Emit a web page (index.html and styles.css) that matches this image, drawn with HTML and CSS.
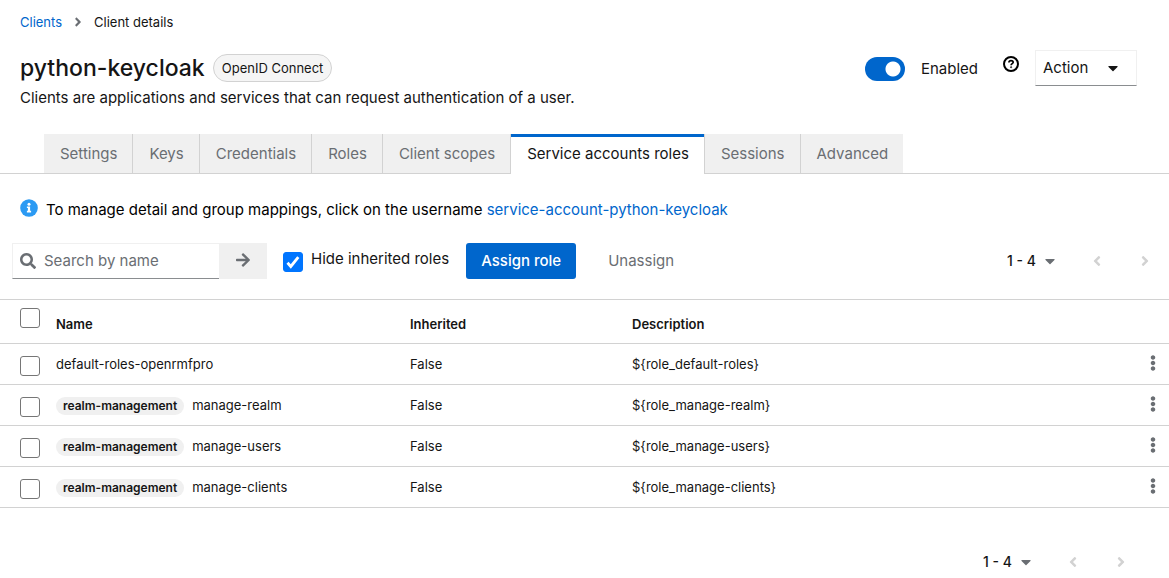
FILE: index.html
```html
<!DOCTYPE html>
<html lang="en">
<head>
<meta charset="utf-8">
<title>Client details</title>
<link rel="stylesheet" href="styles.css">
</head>
<body>
<svg class="sprite" aria-hidden="true">
  <symbol id="angle-right" viewBox="0 0 256 512"><path d="M224.3 273l-136 136c-9.400 9.400-24.600 9.400-33.900 0l-22.600-22.600c-9.400-9.400-9.400-24.600 0-33.900l96.400-96.400-96.400-96.400c-9.400-9.400-9.400-24.600 0-33.900L54.300 103c9.400-9.400 24.600-9.400 33.900 0l136 136c9.500 9.400 9.500 24.600.1 34z"/></symbol>
  <symbol id="angle-left" viewBox="0 0 256 512"><path d="M31.700 239l136-136c9.400-9.400 24.600-9.400 33.900 0l22.600 22.600c9.400 9.400 9.400 24.600 0 33.900L127.900 256l96.400 96.400c9.400 9.400 9.400 24.600 0 33.900L201.700 409c-9.400 9.400-24.600 9.400-33.900 0l-136-136c-9.500-9.400-9.500-24.600-.1-34z"/></symbol>
  <symbol id="caret" viewBox="0 0 320 512"><path d="M31.300 192h257.300c17.800 0 26.700 21.500 14.100 34.100L174.100 354.800c-7.800 7.800-20.500 7.800-28.300 0L17.200 226.100C4.600 213.500 13.500 192 31.300 192z"/></symbol>
  <symbol id="kebab" viewBox="0 0 192 512"><path d="M96 184c39.800 0 72 32.200 72 72s-32.200 72-72 72-72-32.200-72-72 32.200-72 72-72zM24 80c0 39.800 32.200 72 72 72s72-32.200 72-72S135.800 8 96 8 24 40.200 24 80zm0 352c0 39.800 32.200 72 72 72s72-32.200 72-72-32.200-72-72-72-72 32.200-72 72z"/></symbol>
</svg>

<header class="page-header">
  <nav class="breadcrumb" aria-label="Breadcrumb">
    <a href="#clients">Clients</a>
    <svg class="crumb-icon" aria-hidden="true"><use href="#angle-right"/></svg>
    <span>Client details</span>
  </nav>
  <div class="title-row">
    <h1 class="title">python-keycloak</h1>
    <span class="protocol">OpenID Connect</span>
    <div class="header-actions">
      <label class="switch"><input class="switch-input" type="checkbox" role="switch" checked><span>Enabled</span></label>
      <button class="help" type="button" aria-label="Help">
        <svg class="help-icon" viewBox="0 0 16 16" aria-hidden="true"><circle cx="8" cy="8" r="7" stroke-width="2"/><path d="M5.900 6.500C6 5.100 6.900 4.600 8 4.600c1.300 0 2.200.7 2.200 1.700C10.200 7.700 8.100 7.600 8.100 9.200" stroke-width="1.700"/><circle cx="8.100" cy="11.200" r=".6" stroke-width=".9"/></svg>
      </button>
      <button class="action" type="button"><span>Action</span><svg class="caret" aria-hidden="true"><use href="#caret"/></svg></button>
    </div>
  </div>
  <p class="subtitle">Clients are applications and services that can request authentication of a user.</p>
</header>

<nav class="tabs" aria-label="Client sections">
  <button class="tab" type="button">Settings</button>
  <button class="tab" type="button">Keys</button>
  <button class="tab" type="button">Credentials</button>
  <button class="tab" type="button">Roles</button>
  <button class="tab" type="button">Client scopes</button>
  <button class="tab tab-current" type="button" aria-current="page">Service accounts roles</button>
  <button class="tab" type="button">Sessions</button>
  <button class="tab" type="button">Advanced</button>
</nav>

<main>
  <p class="notice">
    <svg class="notice-icon" width="18" height="18" viewBox="0 0 18 18" aria-hidden="true"><circle cx="9" cy="9" r="8.800" fill="#2b9af3"/><circle cx="9" cy="5.200" r="1.500" fill="#fff"/><path d="M6.900 7.500h3.200v4.300h1v1.600H6.900v-1.600h1V9.100h-1z" fill="#fff"/></svg>
    <span>To manage detail and group mappings, click on the username <a href="#user">service-account-python-keycloak</a></span>
  </p>

  <div class="toolbar">
    <form class="search">
      <label class="search-box">
        <svg class="search-icon" viewBox="0 0 512 512" aria-hidden="true"><path d="M505 442.700L405.300 343c-4.500-4.500-10.600-7-17-7H372c27.600-35.300 44-79.700 44-128C416 93.100 322.900 0 208 0S0 93.100 0 208s93.100 208 208 208c48.300 0 92.700-16.400 128-44v16.300c0 6.400 2.500 12.500 7 17l99.700 99.700c9.400 9.400 24.600 9.400 33.900 0l28.300-28.300c9.400-9.400 9.400-24.600.1-34zM208 336c-70.700 0-128-57.200-128-128 0-70.700 57.200-128 128-128 70.700 0 128 57.200 128 128 0 70.700-57.200 128-128 128z"/></svg>
        <input class="search-input" type="text" placeholder="Search by name" aria-label="Search by name">
      </label>
      <button class="search-go" type="button" aria-label="Search">
        <svg width="14" height="16" viewBox="0 0 448 512" aria-hidden="true"><path d="M190.500 66.900l22.200-22.200c9.400-9.400 24.600-9.400 33.900 0L441 239c9.400 9.400 9.400 24.600 0 33.900L246.600 467.300c-9.400 9.400-24.600 9.400-33.900 0l-22.200-22.200c-9.500-9.500-9.300-25 .4-34.300L311.400 296H24c-13.300 0-24-10.700-24-24v-32c0-13.300 10.700-24 24-24h287.400L190.900 101.200c-9.800-9.300-10-24.800-.4-34.300z"/></svg>
      </button>
    </form>
    <label class="inherit"><input class="check" type="checkbox" checked><span>Hide inherited roles</span></label>
    <button class="assign" type="button">Assign role</button>
    <button class="unassign" type="button" disabled>Unassign</button>
    <div class="pager">
      <button class="range" type="button"><span>1 - 4</span><svg class="caret" aria-hidden="true"><use href="#caret"/></svg></button>
      <button class="step" type="button" aria-label="Previous" disabled><svg class="step-icon"><use href="#angle-left"/></svg></button>
      <button class="step" type="button" aria-label="Next" disabled><svg class="step-icon"><use href="#angle-right"/></svg></button>
    </div>
  </div>

  <table class="roles">
    <colgroup><col class="col-check"><col class="col-name"><col class="col-inherited"><col><col class="col-menu"></colgroup>
    <thead>
      <tr><th class="cell-check"><input class="check" type="checkbox" aria-label="Select all"></th><th>Name</th><th>Inherited</th><th>Description</th><td></td></tr>
    </thead>
    <tbody>
      <tr><td class="cell-check"><input class="check" type="checkbox" aria-label="Select default-roles-openrmfpro"></td><td>default-roles-openrmfpro</td><td>False</td><td>${role_default-roles}</td><td class="cell-menu"><button class="menu" type="button" aria-label="Actions"><svg class="menu-icon"><use href="#kebab"/></svg></button></td></tr>
      <tr><td class="cell-check"><input class="check" type="checkbox" aria-label="Select manage-realm"></td><td><span class="badge">realm-management</span>manage-realm</td><td>False</td><td>${role_manage-realm}</td><td class="cell-menu"><button class="menu" type="button" aria-label="Actions"><svg class="menu-icon"><use href="#kebab"/></svg></button></td></tr>
      <tr><td class="cell-check"><input class="check" type="checkbox" aria-label="Select manage-users"></td><td><span class="badge">realm-management</span>manage-users</td><td>False</td><td>${role_manage-users}</td><td class="cell-menu"><button class="menu" type="button" aria-label="Actions"><svg class="menu-icon"><use href="#kebab"/></svg></button></td></tr>
      <tr><td class="cell-check"><input class="check" type="checkbox" aria-label="Select manage-clients"></td><td><span class="badge">realm-management</span>manage-clients</td><td>False</td><td>${role_manage-clients}</td><td class="cell-menu"><button class="menu" type="button" aria-label="Actions"><svg class="menu-icon"><use href="#kebab"/></svg></button></td></tr>
    </tbody>
  </table>

  <div class="pager pager-bottom">
    <button class="range" type="button"><span>1 - 4</span><svg class="caret" aria-hidden="true"><use href="#caret"/></svg></button>
    <button class="step" type="button" aria-label="Previous" disabled><svg class="step-icon"><use href="#angle-left"/></svg></button>
    <button class="step" type="button" aria-label="Next" disabled><svg class="step-icon"><use href="#angle-right"/></svg></button>
  </div>
</main>
</body>
</html>
```
FILE: styles.css
```css
* { box-sizing: border-box; }

body {
  margin: 0;
  background: #fff;
  color: #151515;
  font-family: Inter, "Noto Sans", sans-serif;
  font-size: 15px;
  line-height: 24px;
  overflow-x: hidden;
}

button, input { font: inherit; color: inherit; margin: 0; }
button { border: 0; padding: 0; background: none; white-space: nowrap; }
a { color: #06c; text-decoration: none; }
svg { display: block; fill: currentColor; flex: none; }
.sprite { display: none; }

.page-header { padding: 12px 32px 24px 20px; }
.breadcrumb { display: flex; align-items: center; font-size: 13px; line-height: 20px; }
.crumb-icon { width: 8px; height: 14px; margin: 0 12px; color: #6a6e73; }

.title-row { display: flex; align-items: center; height: 36px; margin-top: 18px; gap: 8px; }
.title { margin: 0; font-size: 23px; line-height: 32px; font-weight: 500; }
.protocol {
  padding: 0 8px;
  border: 1px solid #d2d2d2;
  border-radius: 14px;
  background: #f5f5f5;
  font-size: 13px;
  line-height: 26px;
}
.header-actions { display: flex; align-items: center; margin-left: auto; }
.switch { display: flex; align-items: center; gap: 16px; padding-top: 2px; }
.switch-input {
  appearance: none;
  width: 40px;
  height: 24px;
  border-radius: 12px;
  background: radial-gradient(circle at 28px 12px, #fff 7px, #06c 8px);
}
.help { margin: 0 16px 8px 25px; color: #000; }
.help-icon { width: 16px; height: 16px; fill: none; stroke: currentColor; }
.action {
  display: flex;
  align-items: center;
  justify-content: space-between;
  width: 102px;
  height: 36px;
  padding: 0 18px 0 7px;
  border: 1px solid #f0f0f0;
  border-bottom-color: #8a8d90;
}
.caret { width: 10px; height: 16px; }
.subtitle { margin: 0; }

.tabs { display: flex; height: 40px; padding-left: 44px; border-bottom: 1px solid #d2d2d2; }
.tab { padding: 0 15px 0 16px; background: #f0f0f0; border-right: 1px solid #d2d2d2; color: #6a6e73; }
.tab:last-child { border-right: 0; }
.tab-current { height: 40px; background: #fff; color: #151515; box-shadow: inset 0 3px #06c; }

.notice { display: flex; gap: 8px; margin: 24px 20px 21px; color: #000; }
.notice-icon { margin-top: 1px; }

.toolbar { display: flex; align-items: center; padding: 0 0 20px 12px; }
.search { display: flex; height: 36px; margin-right: 16px; }
.search-box {
  display: flex;
  align-items: center;
  gap: 8px;
  width: 207px;
  padding: 0 8px 0 7px;
  border: 1px solid #f0f0f0;
  border-right: 0;
  border-bottom-color: #8a8d90;
}
.search-icon { width: 16px; height: 16px; color: #6a6e73; }
.search-input { flex: 1; min-width: 0; border: 0; padding: 0; outline: 0; background: none; }
.search-input::placeholder { color: #6a6e73; opacity: 1; }
.search-go { display: flex; align-items: center; justify-content: center; width: 48px; padding-bottom: 2px; background: #f0f0f0; color: #6a6e73; }

.inherit { display: flex; gap: 8px; align-items: flex-start; margin-right: 17px; padding-bottom: 3px; white-space: nowrap; }
.inherit .check { margin-top: 5px; }
.check {
  appearance: none;
  display: block;
  flex: none;
  width: 20px;
  height: 20px;
  border: 1px solid #767676;
  border-radius: 3px;
  background: #fff;
}
.check:checked {
  border-color: #0075ff;
  background: #0075ff url("data:image/svg+xml,%3Csvg xmlns='http://www.w3.org/2000/svg' viewBox='0 0 18 18'%3E%3Cpath d='M3.500 9.800L6.800 13.500L14.300 4.200' fill='none' stroke='white' stroke-width='2.800'/%3E%3C/svg%3E");
}
.assign { height: 36px; padding: 0 15px; border-radius: 3px; background: #06c; color: #fff; font-weight: 500; }
.unassign { margin-left: 32px; color: #6a6e73; }

.pager { display: flex; align-items: center; margin-left: auto; }
.range { display: flex; align-items: center; gap: 9px; margin-right: 18px; font-size: 14px; font-weight: 500; }
.range .caret { color: #6a6e73; }
.step { display: flex; justify-content: center; width: 48px; color: #d2d2d2; }
.step-icon { width: 8px; height: 16px; }

.roles { width: 100%; table-layout: fixed; border-collapse: collapse; border-top: 1px solid #d2d2d2; font-size: 13px; line-height: 20px; }
.col-check { width: 48px; }
.col-name { width: 354px; }
.col-inherited { width: 222px; }
.col-menu { width: 48px; }
.roles th, .roles td { height: 41px; padding: 0 8px; text-align: left; border-bottom: 1px solid #d2d2d2; }
.roles th { height: 44px; padding-top: 4px; font-weight: 600; }
.roles .cell-check { padding: 4px 8px 0 20px; }
.roles th.cell-check { padding: 0 8px 8px 20px; }
.roles .cell-menu { padding: 0 7px 2px; }
.menu { display: block; margin-left: auto; color: #6a6e73; }
.menu-icon { width: 6px; height: 16px; margin: 0 6px; }
.badge {
  display: inline-block;
  margin-right: 8px;
  padding: 0 7px;
  border-radius: 9px;
  background: #f0f0f0;
  font-size: 12px;
  line-height: 18px;
  font-weight: 600;
}
.pager-bottom { justify-content: flex-end; padding: 42px 24px 0 0; }
```
